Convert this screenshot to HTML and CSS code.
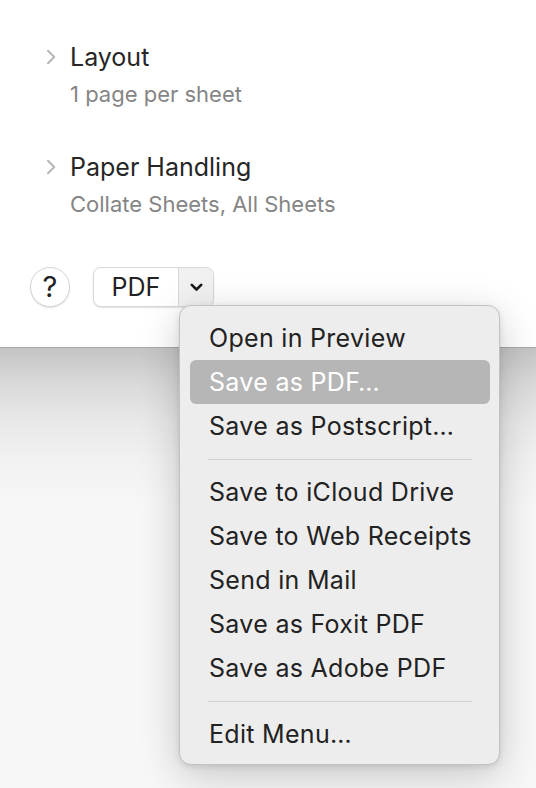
FILE: index.html
```html
<!DOCTYPE html>
<html>
<head>
<meta charset="utf-8">
<link rel="stylesheet" href="styles.css">
</head>
<body>
<div class="panel">
  <div class="group">
    <div class="title-row">
      <svg class="disclosure" width="10" height="16" viewBox="0 0 10 16"><path d="M2 1.8 L8.2 8 L2 14.2" fill="none" stroke="#b6b6b6" stroke-width="2" stroke-linecap="round" stroke-linejoin="round"/></svg>
      <span class="title">Layout</span>
    </div>
    <div class="subtitle">1 page per sheet</div>
  </div>
  <div class="group">
    <div class="title-row">
      <svg class="disclosure" width="10" height="16" viewBox="0 0 10 16"><path d="M2 1.8 L8.2 8 L2 14.2" fill="none" stroke="#b6b6b6" stroke-width="2" stroke-linecap="round" stroke-linejoin="round"/></svg>
      <span class="title">Paper Handling</span>
    </div>
    <div class="subtitle">Collate Sheets, All Sheets</div>
  </div>
  <div class="footer">
    <div class="help">?</div>
    <div class="pdf-btn">
      <span class="pdf-label">PDF</span>
      <span class="pdf-arrow">
        <svg width="13" height="9" viewBox="0 0 13 9"><path d="M1.8 1.8 L6.5 6.5 L11.2 1.8" fill="none" stroke="#1a1a1a" stroke-width="2.6" stroke-linecap="round" stroke-linejoin="round"/></svg>
      </span>
    </div>
  </div>
</div>
<div class="backdrop"></div>
<div class="menu">
  <div class="item">Open in Preview</div>
  <div class="item selected">Save as PDF…</div>
  <div class="item">Save as Postscript…</div>
  <div class="sep"></div>
  <div class="item">Save to iCloud Drive</div>
  <div class="item">Save to Web Receipts</div>
  <div class="item">Send in Mail</div>
  <div class="item">Save as Foxit PDF</div>
  <div class="item">Save as Adobe PDF</div>
  <div class="sep"></div>
  <div class="item">Edit Menu…</div>
</div>
</body>
</html>
```
FILE: styles.css
```css
html, body {
  margin: 0;
  padding: 0;
}
body {
  width: 536px;
  height: 788px;
  overflow: hidden;
  background: #f7f7f7;
  font-family: "Inter", "Liberation Sans", sans-serif;
  position: relative;
}
.panel {
  background: #ffffff;
  height: 348px;
  box-sizing: border-box;
  border-bottom: 1px solid #a9a9a9;
  padding-top: 42px;
  padding-left: 46px;
}
.group + .group {
  margin-top: 45px;
}
.title-row {
  display: flex;
  align-items: center;
  height: 30px;
}
.disclosure {
  width: 10px;
  height: 16px;
  margin-right: 14px;
}
.title {
  font-size: 25px;
  line-height: 30px;
  color: #262626;
}
.subtitle {
  margin-top: 9px;
  margin-left: 24px;
  font-size: 22px;
  line-height: 26px;
  color: #858585;
}
.footer {
  display: flex;
  align-items: center;
  gap: 23px;
  margin-left: -16px;
  margin-top: 50px;
}
.help {
  width: 38px;
  height: 38px;
  border-radius: 50%;
  background: #fff;
  border: 1px solid #d6d6d6;
  box-shadow: 0 1px 1.5px rgba(0,0,0,0.12);
  display: flex;
  align-items: center;
  justify-content: center;
  font-size: 29px;
  line-height: 38px;
  color: #222;
}
.pdf-btn {
  display: flex;
  height: 38px;
  border: 1px solid #d8d8d8;
  border-radius: 8px;
  box-shadow: 0 1px 1.5px rgba(0,0,0,0.12);
  overflow: hidden;
  background: #fff;
}
.pdf-label {
  width: 84px;
  display: flex;
  align-items: center;
  justify-content: center;
  font-size: 25px;
  color: #222;
  border-right: 1px solid #d8d8d8;
}
.pdf-arrow {
  width: 34px;
  display: flex;
  align-items: center;
  justify-content: center;
  background: #f1f1f1;
}
.backdrop {
  height: 440px;
  background: linear-gradient(to bottom, #c4c4c4 0px, #d9d9d9 35px, #e9e9e9 75px, #f2f2f2 115px, #f7f7f7 160px);
}
.menu {
  position: absolute;
  left: 179px;
  top: 305px;
  width: 321px;
  height: 460px;
  box-sizing: border-box;
  padding: 10px 9px 8px 10px;
  background: #ededed;
  border: 1px solid #c2c2c2;
  border-radius: 12px;
  box-shadow: 0 10px 40px rgba(0,0,0,0.2), 0 2px 6px rgba(0,0,0,0.1);
}
.item {
  height: 44px;
  box-sizing: border-box;
  padding-top: 1px;
  line-height: 43px;
  padding-left: 19px;
  font-size: 25px;
  letter-spacing: 0.3px;
  color: #222222;
  border-radius: 6px;
  white-space: nowrap;
}
.item.selected {
  background: #b6b6b6;
  color: #ffffff;
}
.sep {
  height: 1px;
  background: #d0d0d0;
  margin: 11px 18px 10px 18px;
}
```
